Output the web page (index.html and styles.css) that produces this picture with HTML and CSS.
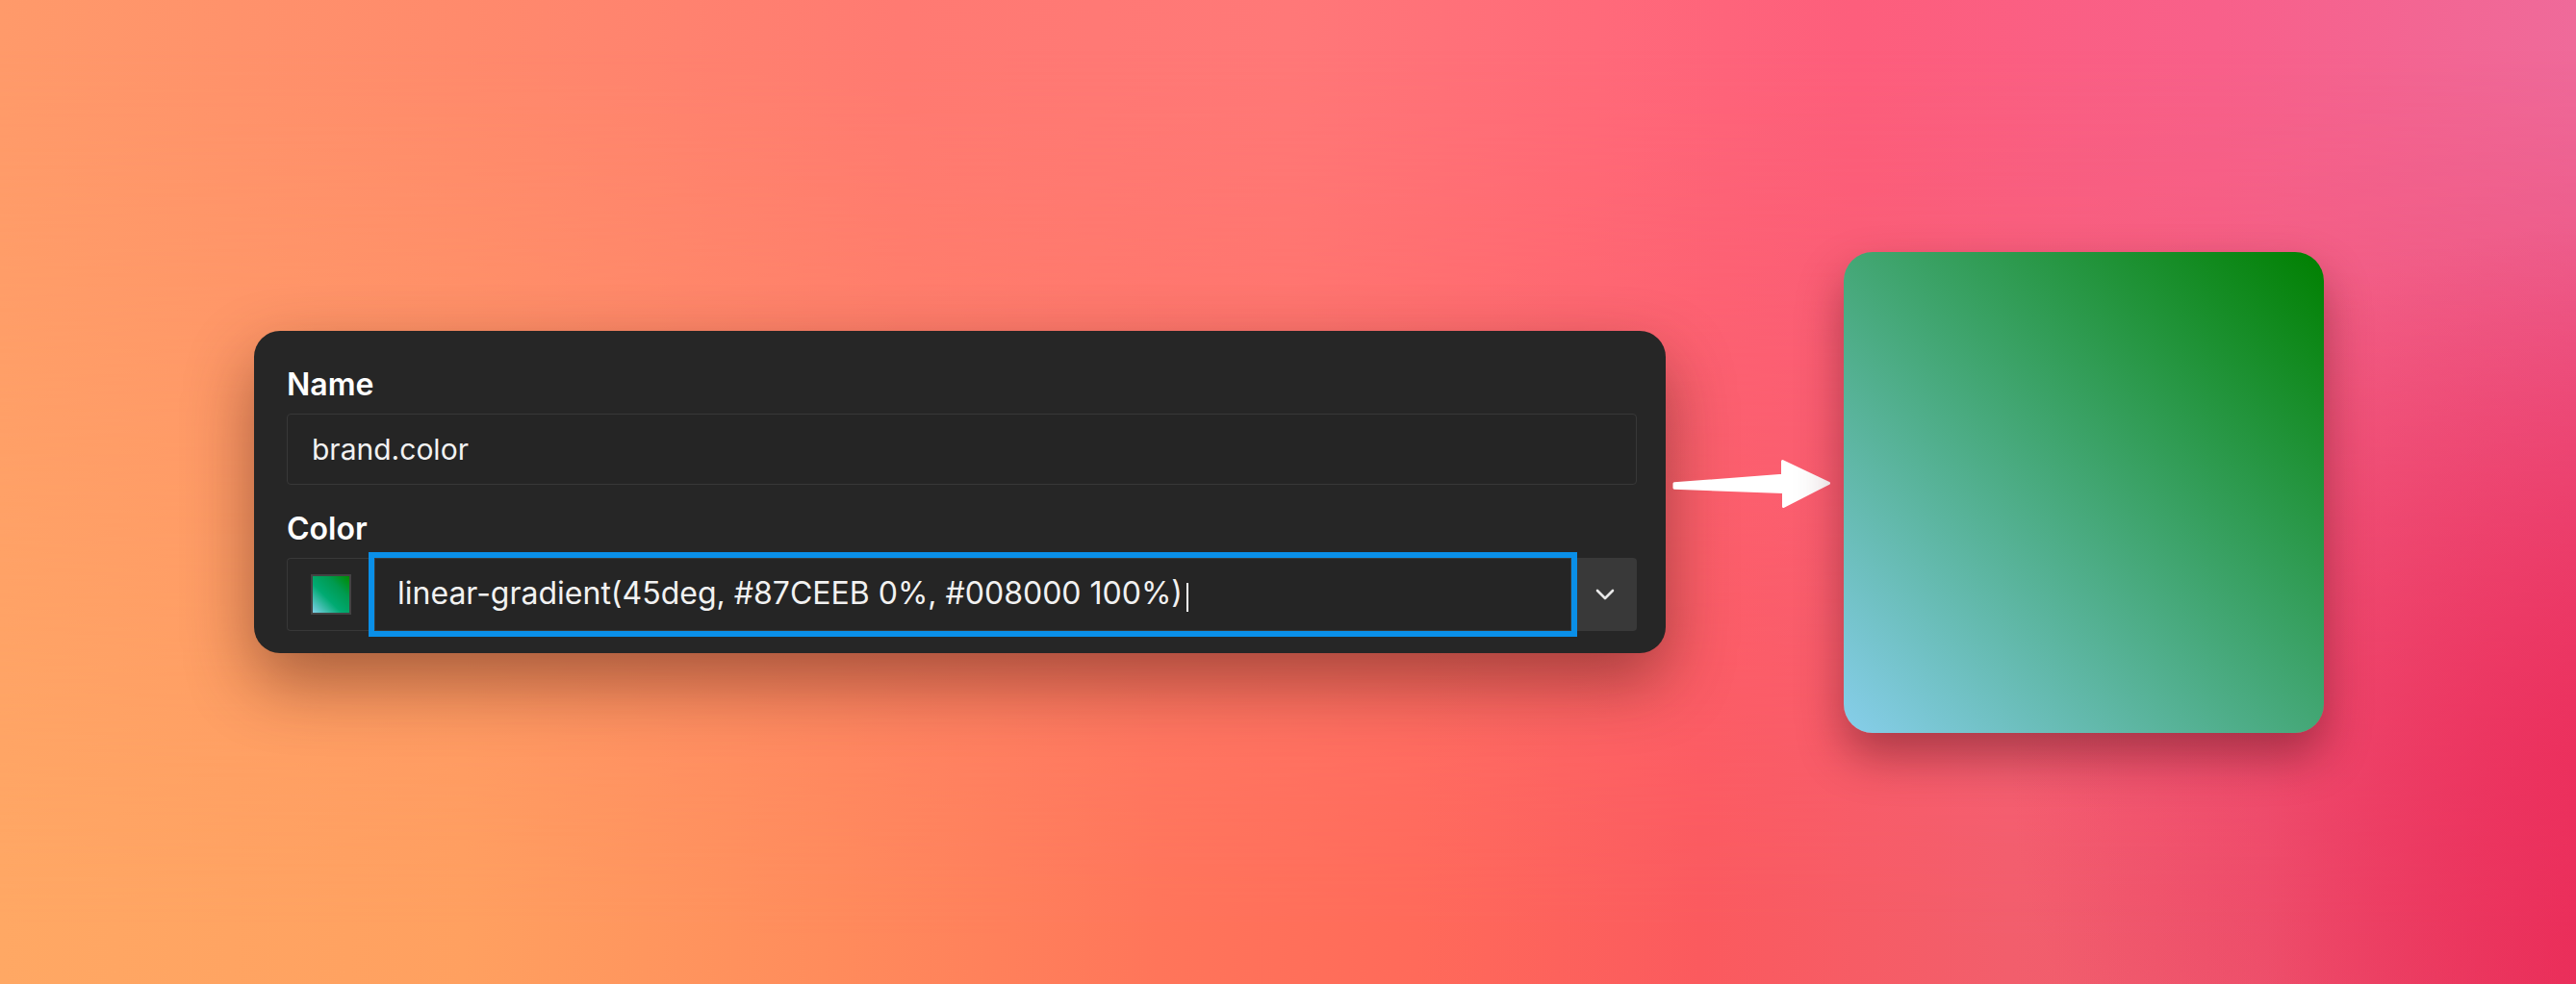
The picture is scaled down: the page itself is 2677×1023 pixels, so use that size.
FILE: index.html
```html
<!DOCTYPE html>
<html lang="en">
<head>
<meta charset="utf-8">
<title>Color token</title>
<link rel="stylesheet" href="styles.css">
</head>
<body>
<div class="stage">
  <div class="panel">
    <div class="field">
      <div class="label">Name</div>
      <div class="text-input">brand.color</div>
    </div>
    <div class="field field-color">
      <div class="label">Color</div>
      <div class="color-row">
        <div class="swatch-cell"><span class="mini-swatch"></span></div>
        <div class="color-input"><span class="value">linear-gradient(45deg, #87CEEB 0%, #008000 100%)</span><span class="caret"></span></div>
        <div class="dropdown">
          <svg class="chevron" width="20" height="12" viewBox="0 0 20 12"><path d="M2 2 L10 10 L18 2" fill="none" stroke="#e8e8e8" stroke-width="2.6" stroke-linecap="round" stroke-linejoin="round"/></svg>
        </div>
      </div>
    </div>
  </div>
  <svg class="arrow" width="185" height="60" viewBox="0 0 185 60">
    <polygon points="9,29.8 121.5,21.3 121.5,6.5 169.5,29.3 122.5,53.5 122.5,38.5 9,34.3" fill="#ffffff" stroke="#ffffff" stroke-width="3" stroke-linejoin="round"/>
  </svg>
  <div class="preview"></div>
</div>
</body>
</html>
```

FILE: styles.css
```css
html, body {
  margin: 0;
  padding: 0;
}
body {
  font-family: Inter, "Noto Sans", "Liberation Sans", sans-serif;
  overflow: hidden;
}
.stage {
  position: relative;
  width: 2677px;
  height: 1023px;
  display: flex;
  align-items: center;
  padding-left: 264px;
  box-sizing: border-box;
  background: linear-gradient(90deg, #ff9a6a 0%, #ff8a6c 18%, #ff7a72 35%, #ff7878 50%, #ff6a7a 62%, #fd5e7c 72%, #f8608a 86%, #ef6a9a 100%);
}
.stage::before {
  content: "";
  position: absolute;
  inset: 0;
  background: linear-gradient(90deg, #ffa864 0%, #ffa060 18%, #ff8c5c 32%, #ff755a 45%, #ff6a5a 55%, #fb5a5e 66%, #f25e6c 78%, #ee5a70 88%, #e8305a 100%);
  -webkit-mask-image: linear-gradient(to bottom, transparent 5%, #000 95%);
  mask-image: linear-gradient(to bottom, transparent 5%, #000 95%);
}
.stage::after {
  content: "";
  position: absolute;
  inset: 0;
  background: radial-gradient(ellipse 22% 55% at 100% 78%, rgba(236, 44, 90, 0.75), rgba(236, 44, 90, 0) 100%);
}
.panel {
  position: relative;
  z-index: 1;
  width: 1467px;
  height: 335px;
  box-sizing: border-box;
  padding: 37px 30px 23px 34px;
  background: #262626;
  border-radius: 27px;
  box-shadow: 0 30px 70px rgba(60, 20, 10, 0.45);
  display: flex;
  flex-direction: column;
  gap: 27px;
}
.field {
  display: flex;
  flex-direction: column;
  gap: 11px;
}
.label {
  font-size: 32px;
  line-height: 38px;
  font-weight: 600;
  color: #ffffff;
}
.text-input {
  height: 74px;
  box-sizing: border-box;
  border: 1px solid #383838;
  border-radius: 4px;
  padding-left: 25px;
  display: flex;
  align-items: center;
  font-size: 30px;
  color: #f2f2f2;
  background: #252525;
}
.color-row {
  display: flex;
  height: 76px;
}
.swatch-cell {
  width: 91px;
  box-sizing: border-box;
  border: 1px solid #383838;
  border-right: none;
  border-radius: 4px 0 0 4px;
  display: flex;
  align-items: center;
  justify-content: center;
}
.mini-swatch {
  width: 42px;
  height: 42px;
  box-sizing: border-box;
  border: 2px solid #434343;
  background: linear-gradient(45deg, #80d0e8 0%, #00aa72 40%, #009a50 70%, #008a00 100%);
}
.color-input {
  flex: 1;
  box-sizing: border-box;
  border: 1px solid #383838;
  outline: 6px solid #0a8fe8;
  padding: 0 0 4px 23px;
  display: flex;
  align-items: center;
  font-size: 32px;
  color: #f2f2f2;
  background: #252525;
  position: relative;
  z-index: 1;
}
.caret {
  display: inline-block;
  width: 2px;
  height: 30px;
  margin-left: 4px;
  margin-top: 10px;
  background: #ffffff;
}
.dropdown {
  width: 68px;
  background: #393939;
  border-radius: 0 4px 4px 0;
  display: flex;
  align-items: center;
  justify-content: center;
}
.chevron {
  display: block;
  margin-left: 2px;
}
.arrow {
  position: relative;
  z-index: 1;
  display: block;
  flex: none;
  margin-bottom: 18px;
}
.preview {
  position: relative;
  z-index: 1;
  width: 499px;
  height: 500px;
  border-radius: 30px;
  background: linear-gradient(45deg, #87ceeb 0%, #008000 100%);
  box-shadow: 0 24px 48px rgba(80, 15, 25, 0.45);
}
```
